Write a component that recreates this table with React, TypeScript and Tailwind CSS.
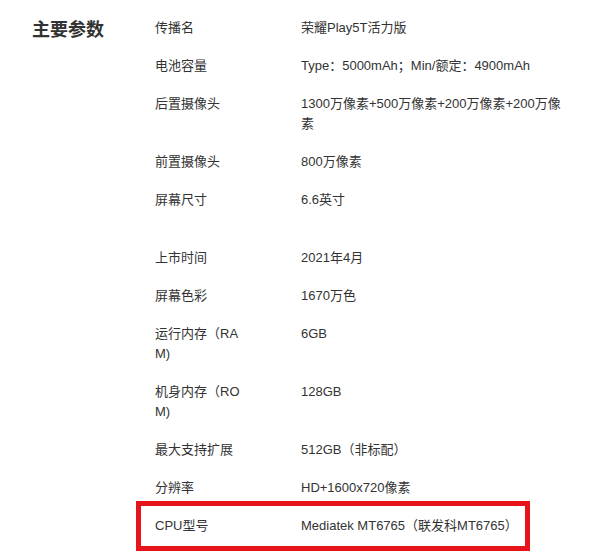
import React from 'react';

const specs: { label: string; value: string; tall?: boolean }[] = [
  { label: '传播名', value: '荣耀Play5T活力版' },
  { label: '电池容量', value: 'Type：5000mAh；Min/额定：4900mAh' },
  { label: '后置摄像头', value: '1300万像素+500万像素+200万像素+200万像素' },
  { label: '前置摄像头', value: '800万像素' },
  { label: '屏幕尺寸', value: '6.6英寸', tall: true },
  { label: '上市时间', value: '2021年4月' },
  { label: '屏幕色彩', value: '1670万色' },
  { label: '运行内存（RAM)', value: '6GB' },
  { label: '机身内存（ROM)', value: '128GB' },
  { label: '最大支持扩展', value: '512GB（非标配）' },
  { label: '分辨率', value: 'HD+1600x720像素' },
];

export default function App() {
  return (
    <div
      className="w-[600px] h-[553px] bg-white overflow-hidden flex pt-[18px] text-[#333]"
      style={{ fontFamily: '"Liberation Sans", "Noto Sans CJK SC", sans-serif' }}
    >
      {/* Section title */}
      <div className="w-[155px] shrink-0 pl-[32px]">
        <h2 className="text-[18px] font-bold leading-[24px]">主要参数</h2>
      </div>

      {/* Spec rows */}
      <div className="flex flex-col gap-[18px] text-[13px] leading-[20px]">
        {specs.map((s) => (
          <div key={s.label} className={`flex ${s.tall ? 'min-h-[40px]' : ''}`}>
            <div className="w-[88px] mr-[58px] shrink-0 break-all">{s.label}</div>
            <div className="w-[272px] break-all">{s.value}</div>
          </div>
        ))}

        {/* Highlighted CPU row */}
        <div className="flex -ml-[19px] -mt-[15px] border-[5px] border-[#e8141b] pl-[14px] py-[10px] w-[394px]">
          <div className="w-[88px] mr-[58px] shrink-0">CPU型号</div>
          <div className="whitespace-nowrap">Mediatek MT6765（联发科MT6765）</div>
        </div>
      </div>
    </div>
  );
}
